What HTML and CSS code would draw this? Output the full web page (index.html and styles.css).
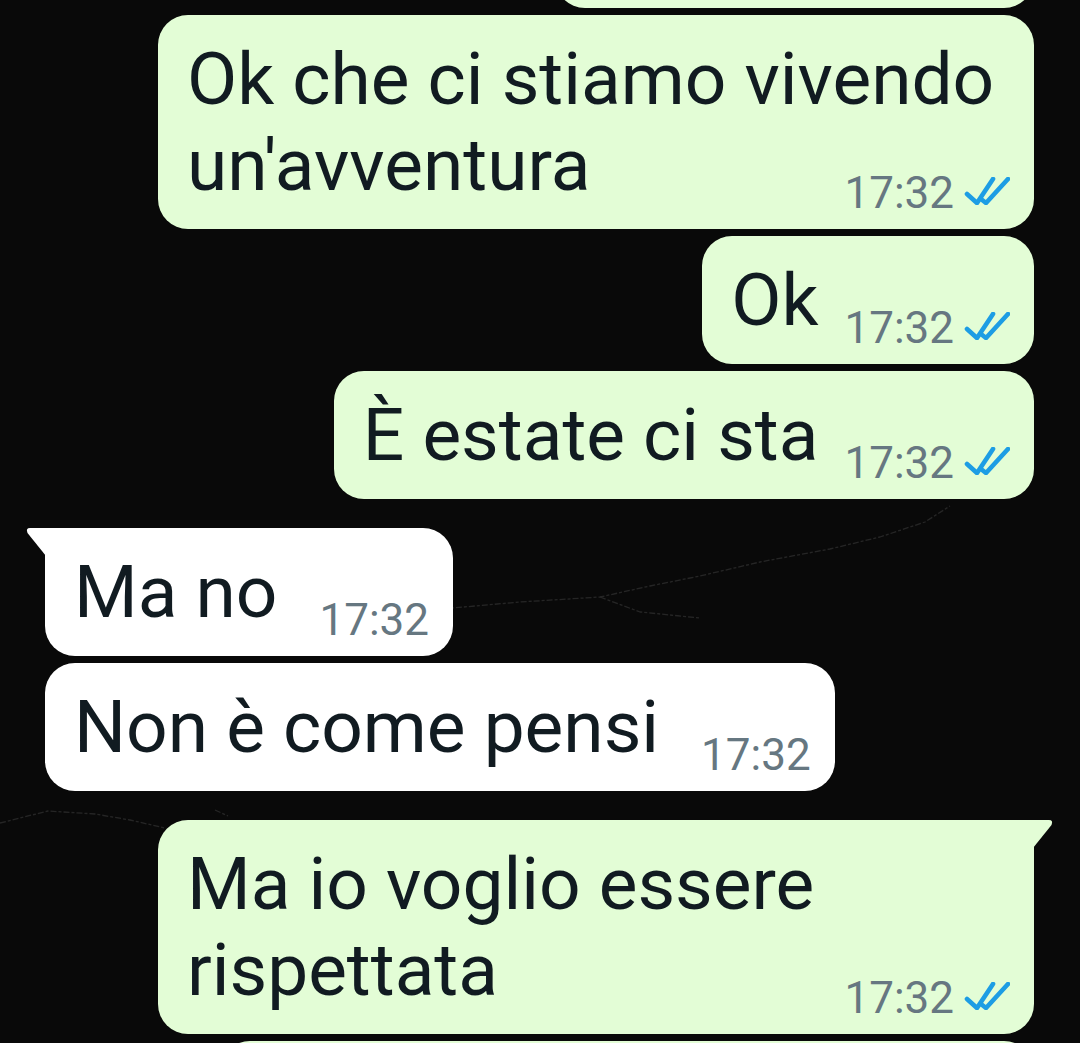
FILE: index.html
```html
<!DOCTYPE html>
<html lang="it">
<head>
    <meta charset="UTF-8">
    <meta name="viewport" content="width=device-width, initial-scale=1.0">
    <title>Chat</title>
    <link rel="stylesheet" href="styles.css">
</head>
<body>
    <div class="chat">
        <div class="msg out partial top-cut"></div>

        <div class="msg out long">
            <p class="text">Ok che ci stiamo vivendo<br>un'avventura</p>
            <div class="meta">
                <span class="time">17:32</span>
                <svg class="ticks" viewBox="0 0 46 28"><path d="M3 17 L13 26 L29 2"/><path d="M17 22 L22 26 L44 2"/></svg>
            </div>
        </div>

        <div class="msg out">
            <p class="text">Ok</p>
            <div class="meta">
                <span class="time">17:32</span>
                <svg class="ticks" viewBox="0 0 46 28"><path d="M3 17 L13 26 L29 2"/><path d="M17 22 L22 26 L44 2"/></svg>
            </div>
        </div>

        <div class="msg out">
            <p class="text">È estate ci sta</p>
            <div class="meta">
                <span class="time">17:32</span>
                <svg class="ticks" viewBox="0 0 46 28"><path d="M3 17 L13 26 L29 2"/><path d="M17 22 L22 26 L44 2"/></svg>
            </div>
        </div>

        <div class="msg in tail">
            <p class="text">Ma no</p>
            <div class="meta">
                <span class="time">17:32</span>
            </div>
        </div>

        <div class="msg in">
            <p class="text">Non è come pensi</p>
            <div class="meta">
                <span class="time">17:32</span>
            </div>
        </div>

        <div class="msg out long tail">
            <p class="text">Ma io voglio essere<br>rispettata</p>
            <div class="meta">
                <span class="time">17:32</span>
                <svg class="ticks" viewBox="0 0 46 28"><path d="M3 17 L13 26 L29 2"/><path d="M17 22 L22 26 L44 2"/></svg>
            </div>
        </div>

        <div class="msg out partial bottom-cut"></div>
    </div>
</body>
</html>
```

FILE: styles.css
```css
body {
    margin: 0;
    background-color: #090909;
    background-image: url("data:image/svg+xml,%3Csvg xmlns='http://www.w3.org/2000/svg' width='1080' height='1043'%3E%3Cg fill='none' stroke='%23707070' stroke-width='1.3' stroke-dasharray='6 2 3 2' stroke-linejoin='round' opacity='.28'%3E%3Cpath d='M430 610 L520 602 L600 597 L650 586 L700 576 L760 562 L830 549 L880 537 L925 522 L950 506'/%3E%3Cpath d='M600 597 L640 612 L700 618'/%3E%3Cpath d='M0 823 L48 811 L95 814 L130 820 L165 828'/%3E%3Cpath d='M215 810 L228 816'/%3E%3C/g%3E%3C/svg%3E");
    background-repeat: no-repeat;
    font-family: 'Roboto', 'Noto Sans', sans-serif;
    color: #111b21;
    overflow: hidden;
}

.chat {
    display: flex;
    flex-direction: column;
    gap: 7px;
    height: 1043px;
    overflow: hidden;
}

.msg {
    position: relative;
    display: flex;
    align-items: flex-end;
    gap: 26px;
    box-sizing: border-box;
    padding: 21px 24px 21px 29px;
    border-radius: 30px;
}

.out {
    align-self: flex-end;
    margin-right: 46px;
    background: #e3fdd6;
}

.in {
    align-self: flex-start;
    margin-left: 45px;
    background: #ffffff;
    gap: 42px;
    padding-right: 24px;
}

.text {
    margin: 0;
    font-size: 73px;
    line-height: 86px;
    white-space: nowrap;
}

.meta {
    display: flex;
    align-items: flex-end;
    justify-content: flex-end;
    height: 42px;
    margin-bottom: -6px;
    font-size: 44px;
    line-height: 42px;
    color: #667781;
}

.ticks {
    width: 46px;
    height: 28px;
    margin-left: 10px;
    margin-bottom: 9px;
    fill: none;
    stroke: #1d9de4;
    stroke-width: 4.6;
    stroke-linecap: round;
    stroke-linejoin: round;
}

/* wrapped messages take the full bubble width, time sits under the last line */
.long {
    display: block;
    width: 876px;
}

.long .meta {
    margin-top: -36px;
}

/* bubble tail on the first message of a group */
.tail.in {
    margin-top: 22px;
    border-top-left-radius: 0;
}

.tail.out {
    margin-top: 22px;
    border-top-right-radius: 0;
}

.tail::before {
    content: "";
    position: absolute;
    top: 0;
    width: 20px;
    height: 28px;
    background: inherit;
}

.tail.in::before {
    left: -19px;
    clip-path: path('M4 0 H20 V28 L1.5 5 Q-0.5 0 4 0 Z');
}

.tail.out::before {
    right: -19px;
    clip-path: path('M16 0 H0 V28 L18.5 5 Q20.5 0 16 0 Z');
}

/* messages cut by the screen edges */
.partial {
    flex-shrink: 0;
}

.top-cut {
    width: 479px;
    height: 120px;
    margin-top: -112px;
}

.bottom-cut {
    width: 814px;
    height: 200px;
}
```
